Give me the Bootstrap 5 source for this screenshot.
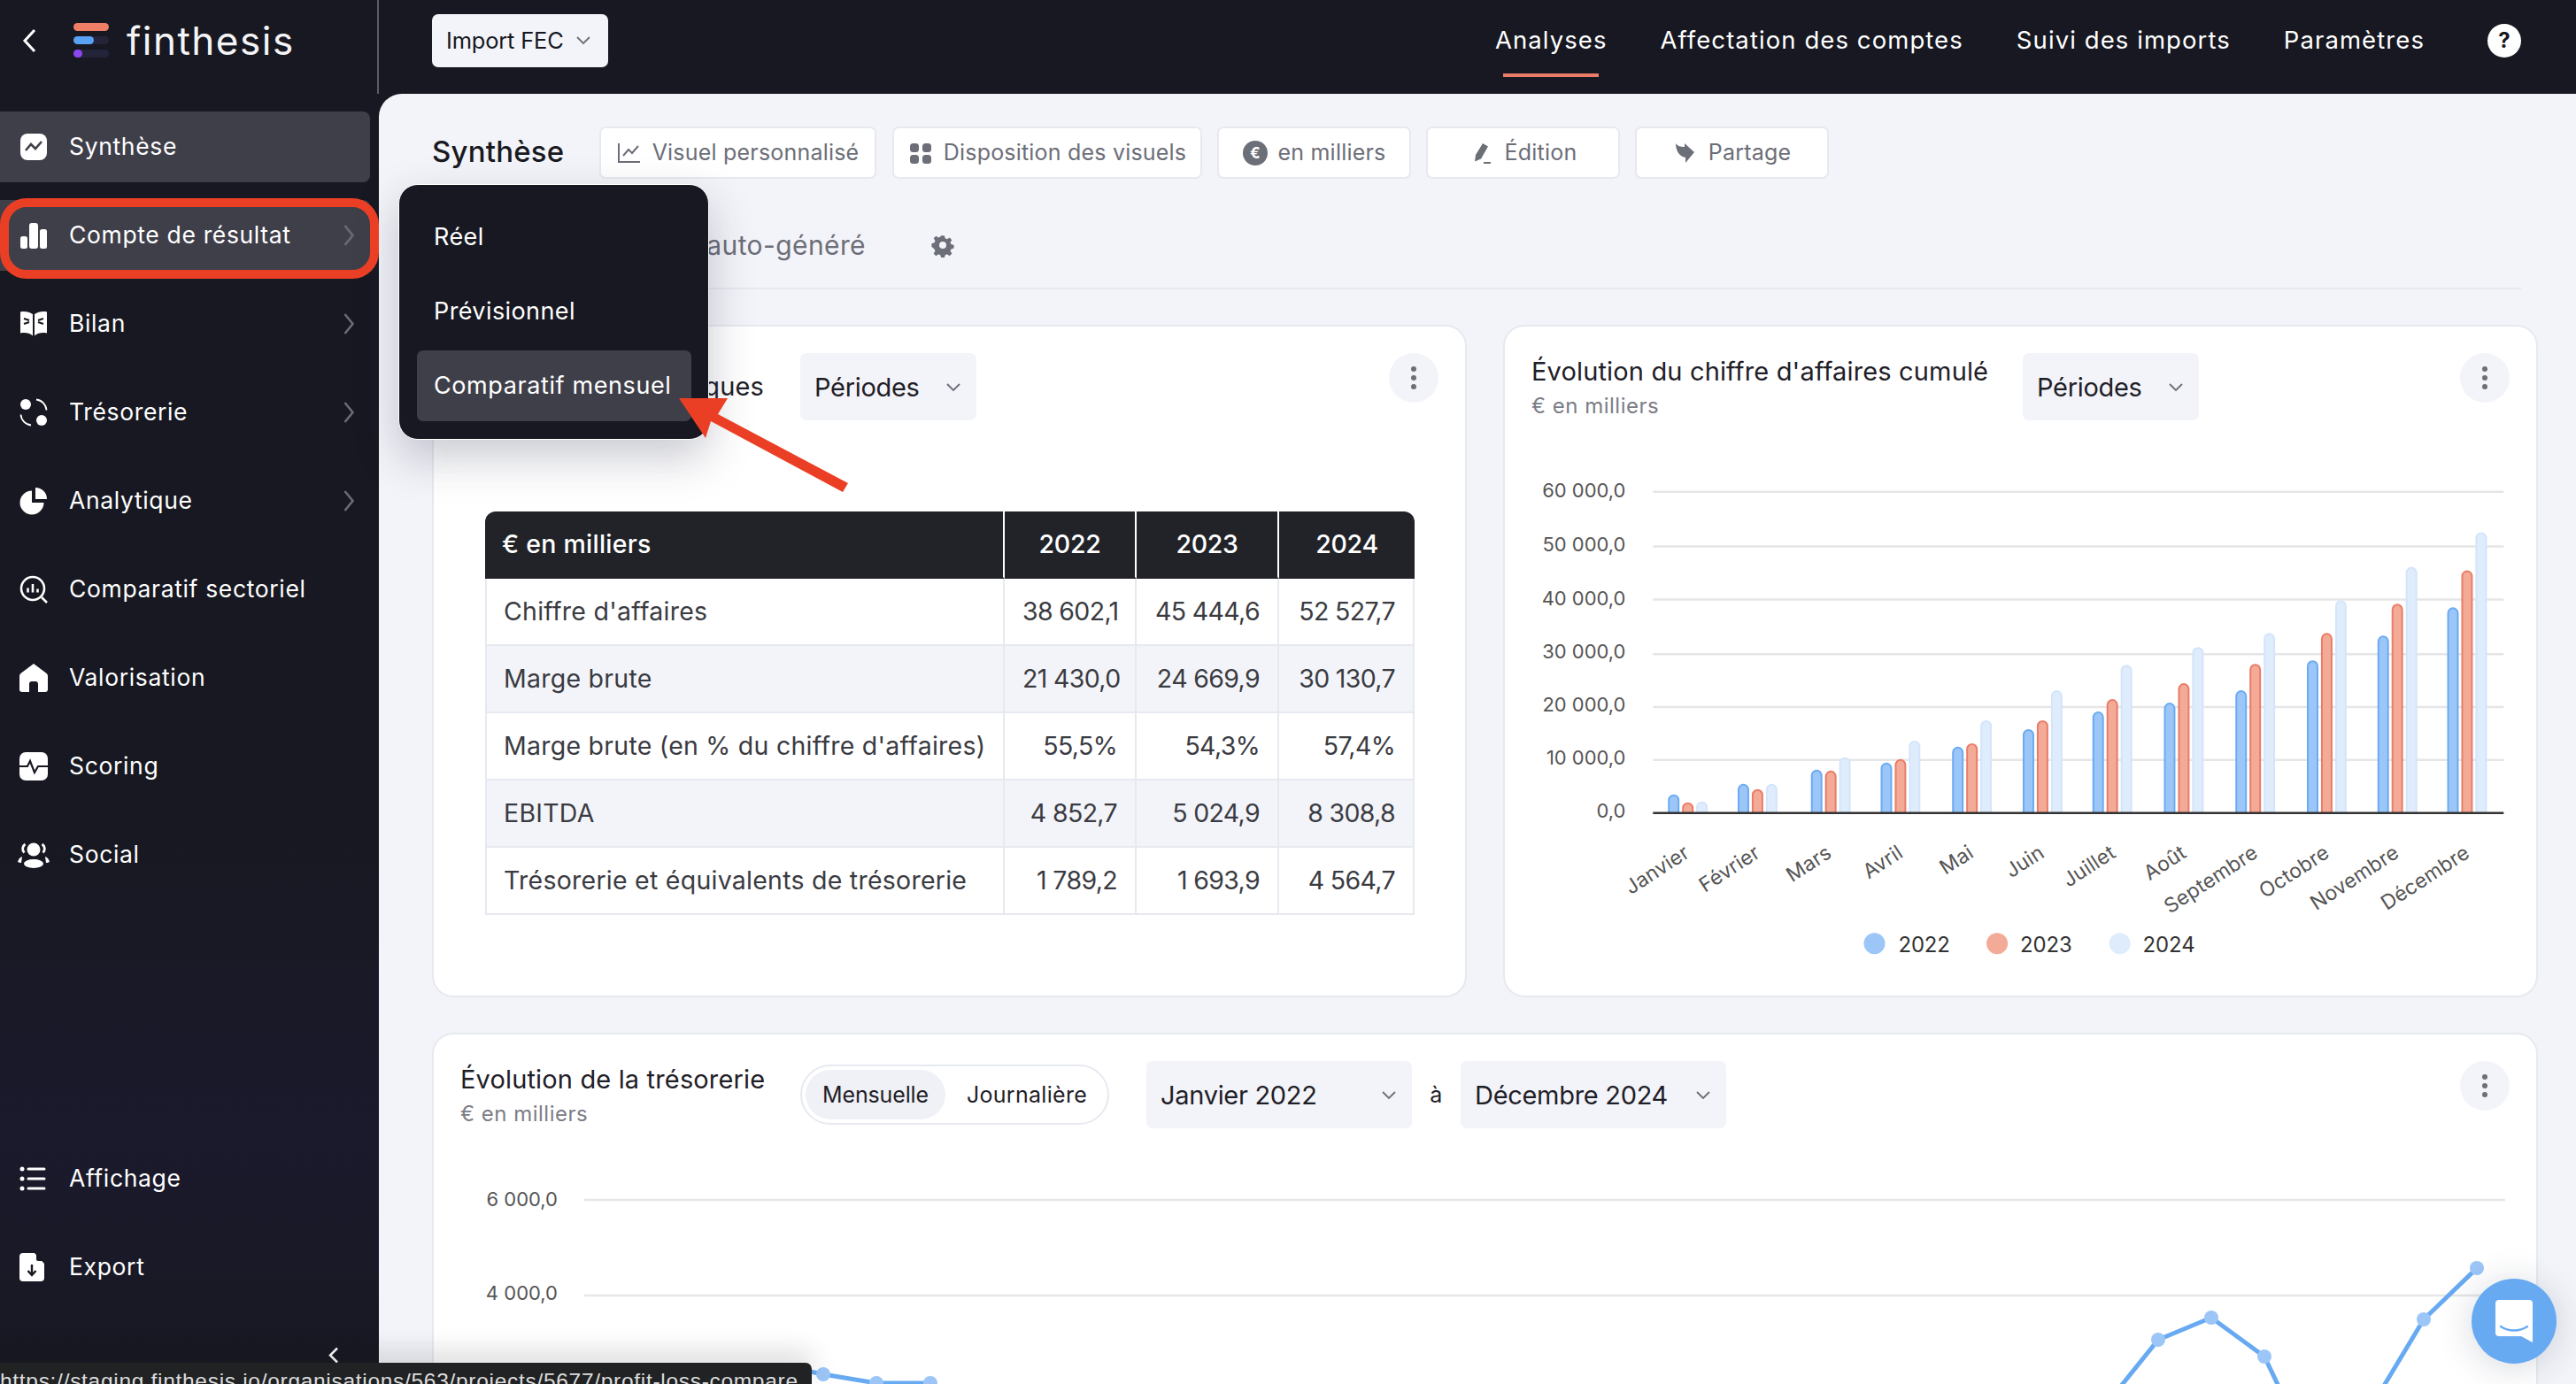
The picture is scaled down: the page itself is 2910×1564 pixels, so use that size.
<!DOCTYPE html>
<html lang="fr">
<head>
<meta charset="utf-8">
<title>finthesis</title>
<link href="https://cdn.jsdelivr.net/npm/bootstrap@5.3.0/dist/css/bootstrap.min.css" rel="stylesheet">
<style>
html,body{height:100%;margin:0}
body{font-family:"Inter","Noto Sans",sans-serif;font-size:26px;background:#171821;overflow:hidden;position:relative;letter-spacing:.35px}
.app-shell{width:2910px;height:1564px}
.side-panel{width:428px;flex:none;height:1564px;background:linear-gradient(180deg,#171821 0,#171821 60%,#1b1a2d 82%,#171821 100%)}
.side-top{height:106px;border-right:2px solid #5c5c64;padding:0 0 14px 25px}
.back-ico{width:16px;height:28px;margin-right:42px}
.logo-mark{width:40px;height:40px;margin-right:20px}
.logo-word{font-size:44px;color:#f4f4f6;letter-spacing:1.5px;line-height:1}
.side-list{padding-top:20px}
.side-list .nav-link{height:80px;width:418px;margin-bottom:20px;color:#fff;padding:0 18px 0 22px;border-radius:0 8px 8px 0;font-size:26.5px;letter-spacing:.65px}
.side-list .nav-link.is-on{background:#3f3f4a}
.side-ico{width:32px;height:32px;margin-right:24px;flex:none}
.side-ico-wide{width:36px;margin-left:-2px;margin-right:22px}
.side-chev{width:12px;height:28px;margin-left:auto}
.side-foot{margin-top:auto;padding-bottom:72px}
.collapse-ico{position:absolute;left:370px;top:1522px;width:13px;height:19px}
.work-col{min-width:0}
.top-bar{height:106px;padding:0 62px 14px 60px;background:#171821}
.import-btn{width:199px;height:60px;background:#f3f4f9;color:#17181f;border:0;border-radius:7px;padding:0 20px 0 16px;font-size:25.5px;letter-spacing:-.2px}
.top-links{gap:60px;margin-left:auto;margin-right:71px}
.top-links .nav-link{color:#fff;padding:0;font-size:27.5px;position:relative;letter-spacing:1.08px}
.top-links .nav-link.is-on::after{content:"";position:absolute;left:9px;right:10px;bottom:-20px;height:4px;background:#ea7c68}
.help-ico{width:38px;height:38px;background:#fff;border-radius:50%;color:#171821;font-weight:700;font-size:24px;line-height:38px;text-align:center;letter-spacing:0}
.work-area{background:#f3f4f9;border-top-left-radius:26px;padding:37px 43px 0 60px;height:1458px;overflow:hidden}
.tool-row{height:58px}
.page-name{font-size:33px;font-weight:500;color:#191a21;width:189px;letter-spacing:.2px}
.tool-btn{height:59px;background:#fff;border:2px solid #e7e9f0;border-radius:7px;color:#6c6e78;font-size:25px;padding:2px 0 0;letter-spacing:.2px}
.tool-btn svg{width:28px;height:28px;margin-right:12px;flex:none}
.tb-a{width:313px;margin-right:18px}
.tb-b{width:350px;margin-right:17px}
.tb-c{width:219px;margin-right:17px}
.tb-d{width:219px;margin-right:17px}
.tb-e{width:219px}
.tab-row{height:126px;border-bottom:2px solid #e7e9f0;margin-right:19px;margin-bottom:40px;padding-top:28px}
.tab-name{width:490px;text-align:right;font-size:30px;color:#6c6e78;line-height:48px;white-space:nowrap;overflow:hidden;letter-spacing:.4px}
.gear-ico{width:28px;height:28px;margin-left:73px}
.two-cols{--bs-gutter-x:41px;margin-bottom:40px}
.panel-box{border:2px solid #e7e9f0;border-radius:24px;background:#fff;--bs-card-bg:#fff}
.panel-tall{height:760px}
.panel-low{height:500px}
.panel-head{padding:30px 30px 0 30px}
.panel-title{font-size:29px;color:#1f2027;line-height:40px;white-space:nowrap;letter-spacing:.15px}
.panel-sub{font-size:24px;color:#7b7d87;line-height:36px;margin-top:1px;letter-spacing:.5px}
.head-a{width:384px;flex:none;padding-top:1px}
.head-a1{text-align:right;line-height:76px;overflow:hidden;padding:0 41px 0 0}
.head-b{width:555px;flex:none;padding-top:1px}
.pick-btn{height:76px;background:#f3f4f9;border:0;border-radius:7px;color:#1f2027;font-size:29px;padding:2px 18px 0 16px;letter-spacing:-.3px}
.pick-btn svg{width:16px;height:10px;flex:none;margin-left:auto}
.pick-a{width:199px}
.pick-b{width:300px}
.kebab-btn{width:56px;height:56px;border-radius:50%;background:#f3f4f9;margin-left:auto;border:0;padding:0}
.kebab-btn svg{width:8px;height:28px}
.tbl-wrap{padding:103px 58px 0 58px}
.fin-table{border-collapse:separate;border-spacing:0;width:1050px;table-layout:fixed;font-size:28.5px;margin:0;color:#3a3b42;--bs-table-color:#3a3b42;letter-spacing:.25px}
.fin-table th,.fin-table td{height:76px;padding:0 20px;vertical-align:middle;border:0;border-right:2px solid #e7e9f0;border-bottom:2px solid #e7e9f0;white-space:nowrap;font-weight:400}
.fin-table td:first-child{border-left:2px solid #e7e9f0;padding-left:19px}
.fin-table th{background:#212329;color:#fff;--bs-table-bg:#212329;--bs-table-color:#fff;border-right-color:#fff;border-bottom:2px solid #212329;font-weight:500}
.fin-table th:first-child{border-top-left-radius:12px;padding-left:19px;text-align:left}
.fin-table th:last-child{border-top-right-radius:12px;border-right:0}
.fin-table tbody tr:nth-child(even) td{--bs-table-bg:#f3f4f9;background:#f3f4f9}
.c-1{width:587px}.c-2{width:149px}.c-3{width:161px}.c-4{width:153px}
.fin-table td.num-cell{text-align:right;letter-spacing:-.65px}
.fin-table th.th-mid{text-align:center;letter-spacing:-.3px}
.chart-svg{display:block}
.chart-svg text{font-family:"Inter","Noto Sans",sans-serif}
.axis-t{font-size:22px;fill:#555;letter-spacing:0}
.month-t{font-size:23px;fill:#555;letter-spacing:.2px}
.leg-t{font-size:24px;fill:#333;letter-spacing:-.1px}
.mode-pill{width:349px;height:68px;border:2px solid #e7e9f0;border-radius:34px;padding:4px;margin:4px 42px 0 0;font-size:25px;flex:none}
.mode-on{width:158px;height:56px;background:#f0f1f6;border-radius:28px;color:#1f2027;letter-spacing:-.15px;padding-top:2px}
.mode-off{width:172px;height:56px;color:#1f2027;letter-spacing:.3px;margin-left:6px;padding-top:2px}
.range-a{width:55px;font-size:25px;color:#1f2027;line-height:76px;text-align:center;flex:none}
.pop-menu{position:absolute;left:450px;top:208px;width:351px;height:289px;display:block;background:#171821;border:1px solid #fff;border-radius:22px;padding:19px 20px;margin:0;box-shadow:0 20px 50px rgba(40,42,70,.25);--bs-dropdown-bg:#171821}
.pop-menu .dropdown-item{height:80px;width:310px;color:#fff;border-radius:7px;padding:0 0 0 19px;font-size:27px;margin-bottom:4px;display:flex;align-items:center;background:transparent;letter-spacing:.4px}
.pop-menu .dropdown-item.is-on{background:#3f3f4a;margin-top:1px;letter-spacing:.6px}
.red-ring{position:absolute;left:0;top:224px;width:428px;height:91px;border:10px solid #ea3f24;border-radius:30px;pointer-events:none;z-index:1100}
.red-arrow{position:absolute;left:760px;top:445px;width:205px;height:115px;z-index:1100}
.status-tip{position:absolute;left:0;top:1540px;width:917px;height:24px;background:#202224;border-top-right-radius:7px;color:#dcdcdc;font-family:"Liberation Sans",Arial,sans-serif;font-size:24.5px;line-height:28px;padding-top:7px;overflow:hidden;white-space:nowrap;box-shadow:0 -10px 30px rgba(20,20,30,.18);letter-spacing:.7px}
.chat-fab{position:absolute;left:2792px;top:1445px;width:96px;height:96px;border-radius:50%;background:#68aaf2;box-shadow:0 4px 40px rgba(30,40,70,.18)}
.chat-fab svg{width:42px;height:48px}
</style>
</head>
<body>
<div class="app-shell d-flex">
  <aside class="side-panel d-flex flex-column">
    <div class="side-top d-flex align-items-center">
      <svg class="back-ico" viewBox="0 0 16 28"><path d="M14 2 3 14l11 12" fill="none" stroke="#fff" stroke-width="3"/></svg>
      <svg class="logo-mark" viewBox="0 0 40 40">
        <rect y="0" width="40" height="9" rx="4.5" fill="#ee7f66"/>
        <rect y="15" width="40" height="9" rx="4.5" fill="#23243a"/>
        <rect y="15" width="23" height="9" rx="4.5" fill="#5aa2f5"/>
        <rect y="30" width="40" height="9" rx="4.5" fill="#23243a"/>
        <rect y="30" width="10" height="9" rx="4.5" fill="#8b46ee"/>
      </svg>
      <span class="logo-word">finthesis</span>
    </div>
    <nav class="nav flex-column side-list flex-grow-1 flex-nowrap">
      <a class="nav-link d-flex align-items-center is-on" href="#"><svg class="side-ico" viewBox="0 0 32 32"><rect x="1" y="1" width="30" height="30" rx="8" fill="#fff"/><path d="M7 20l6-7 5 5 7-8" fill="none" stroke="#3f3f4a" stroke-width="2.6"/></svg>Synthèse</a>
      <a class="nav-link d-flex align-items-center is-on" href="#"><svg class="side-ico" viewBox="0 0 32 32"><rect x="1" y="17" width="8" height="14" rx="2.5" fill="#fff"/><rect x="11" y="2" width="10" height="29" rx="3" fill="#fff"/><rect x="23" y="9" width="8" height="22" rx="2.5" fill="#fff"/></svg>Compte de résultat<svg class="side-chev" viewBox="0 0 12 28"><path d="M1.500 3 10.500 14l-9 11" fill="none" stroke="#6b6b75" stroke-width="2.6"/></svg></a>
      <a class="nav-link d-flex align-items-center" href="#"><svg class="side-ico" viewBox="0 0 32 32"><path d="M15 5C11 2.500 6 1.500 1 2.500v24c5-1 10-.5 14 3zM17 5c4-2.500 9-3.500 14-2.500v24c-5-1-10-.5-14 3z" fill="#fff"/><path d="M5 10l6 2M5 16l6-2M27 10l-6 2M27 16l-6-2" stroke="#171821" stroke-width="2"/></svg>Bilan<svg class="side-chev" viewBox="0 0 12 28"><path d="M1.500 3 10.500 14l-9 11" fill="none" stroke="#6b6b75" stroke-width="2.600"/></svg></a>
      <a class="nav-link d-flex align-items-center" href="#"><svg class="side-ico" viewBox="0 0 32 32"><circle cx="7" cy="7" r="6" fill="#fff"/><circle cx="25" cy="25" r="6" fill="#fff"/><path d="M19 1.500a13 13 0 0 1 11.500 12M1.500 18.500a13 13 0 0 0 11.500 12" fill="none" stroke="#fff" stroke-width="1.800"/></svg>Trésorerie<svg class="side-chev" viewBox="0 0 12 28"><path d="M1.500 3 10.500 14l-9 11" fill="none" stroke="#6b6b75" stroke-width="2.600"/></svg></a>
      <a class="nav-link d-flex align-items-center" href="#"><svg class="side-ico" viewBox="0 0 32 32"><path d="M14 4.500a13.500 13.500 0 1 0 13.500 13.500H14z" fill="#fff"/><path d="M18 1a13 13 0 0 1 13 13H18z" fill="#fff"/></svg>Analytique<svg class="side-chev" viewBox="0 0 12 28"><path d="M1.500 3 10.500 14l-9 11" fill="none" stroke="#6b6b75" stroke-width="2.600"/></svg></a>
      <a class="nav-link d-flex align-items-center" href="#"><svg class="side-ico" viewBox="0 0 32 32"><circle cx="15" cy="15" r="13" fill="none" stroke="#fff" stroke-width="2.600"/><path d="M9.500 14.500v5M15 10v9.500M20.500 15.500v4M25 25l6 6" fill="none" stroke="#fff" stroke-width="2.600"/></svg>Comparatif sectoriel</a>
      <a class="nav-link d-flex align-items-center" href="#"><svg class="side-ico" viewBox="0 0 32 32"><path d="M16 0 30 10.500a4 4 0 0 1 2 3.500v15a3 3 0 0 1-3 3h-8V23a3 3 0 0 0-3-3h-4a3 3 0 0 0-3 3v9H3a3 3 0 0 1-3-3V14a4 4 0 0 1 2-3.500z" fill="#fff"/></svg>Valorisation</a>
      <a class="nav-link d-flex align-items-center" href="#"><svg class="side-ico" viewBox="0 0 32 32"><rect x="0" y="0" width="32" height="32" rx="7" fill="#fff"/><path d="M0 16h9l3-6 5 13 4-7h11" fill="none" stroke="#171821" stroke-width="2.200"/></svg>Scoring</a>
      <a class="nav-link d-flex align-items-center" href="#"><svg class="side-ico side-ico-wide" viewBox="0 0 36 32"><circle cx="18" cy="10" r="7.500" fill="#fff"/><ellipse cx="18" cy="26" rx="11" ry="5" fill="#fff"/><path d="M8.500 4a6 6 0 0 0-1 9.500M27.500 4a6 6 0 0 1 1 9.500" fill="none" stroke="#fff" stroke-width="2.800"/><path d="M5 18c-3 1-4 3-5 6 2 1 3 1 4 1zM31 18c3 1 4 3 5 6-2 1-3 1-4 1z" fill="#fff"/></svg>Social</a>
      <div class="side-foot">
        <a class="nav-link d-flex align-items-center" href="#"><svg class="side-ico" viewBox="0 0 32 32"><circle cx="3" cy="5" r="2.500" fill="#fff"/><circle cx="3" cy="16" r="2.500" fill="#fff"/><circle cx="3" cy="27" r="2.500" fill="#fff"/><path d="M10 5h18M10 16h18M10 27h18" stroke="#fff" stroke-width="3" stroke-linecap="round"/></svg>Affichage</a>
        <a class="nav-link d-flex align-items-center" href="#"><svg class="side-ico" viewBox="0 0 32 32"><path d="M4 0h13l11 12v16a4 4 0 0 1-4 4H4a4 4 0 0 1-4-4V4a4 4 0 0 1 4-4z" fill="#fff"/><path d="M19 0l9 9h-7a2 2 0 0 1-2-2z" fill="#171821"/><path d="M14 13v11M9.500 20l4.500 5 4.500-5" fill="none" stroke="#171821" stroke-width="2.400"/></svg>Export</a>
      </div>
    </nav>
  </aside>

  <div class="work-col flex-grow-1 d-flex flex-column">
    <header class="top-bar d-flex align-items-center">
      <button class="import-btn btn d-flex align-items-center justify-content-between" type="button">Import FEC<svg width="16" height="10" viewBox="0 0 16 10"><path d="M1 1l7 7 7-7" fill="none" stroke="#6c6e78" stroke-width="1.800"/></svg></button>
      <nav class="nav top-links">
        <a class="nav-link is-on" href="#">Analyses</a>
        <a class="nav-link" href="#">Affectation des comptes</a>
        <a class="nav-link" href="#">Suivi des imports</a>
        <a class="nav-link" href="#">Paramètres</a>
      </nav>
      <div class="help-ico">?</div>
    </header>

    <main class="work-area">
      <div class="tool-row d-flex align-items-center">
        <div class="page-name">Synthèse</div>
        <button class="btn tool-btn tb-a d-flex align-items-center justify-content-center" type="button"><svg viewBox="0 0 28 28"><path d="M2 3v21h24" fill="none" stroke="#6c6e78" stroke-width="2"/><path d="M7 17l6-7 4 4 7-8" fill="none" stroke="#6c6e78" stroke-width="2"/></svg>Visuel personnalisé</button>
        <button class="btn tool-btn tb-b d-flex align-items-center justify-content-center" type="button"><svg viewBox="0 0 28 28"><rect x="2" y="3" width="10" height="10" rx="3.500" fill="#6c6e78"/><rect x="16" y="3" width="10" height="10" rx="3.500" fill="#6c6e78"/><rect x="2" y="16" width="10" height="10" rx="3.500" fill="#6c6e78"/><rect x="16" y="16" width="10" height="10" rx="3.500" fill="#6c6e78"/></svg>Disposition des visuels</button>
        <button class="btn tool-btn tb-c d-flex align-items-center justify-content-center" type="button"><svg viewBox="0 0 28 28"><circle cx="14" cy="14" r="14" fill="#6c6e78"/><text x="14" y="20" text-anchor="middle" font-size="17" font-weight="700" fill="#fff">€</text></svg>en milliers</button>
        <button class="btn tool-btn tb-d d-flex align-items-center justify-content-center" type="button"><svg viewBox="0 0 28 28"><path d="M15 3l6 3.500-8 14-7 3 1-7.500z" fill="#6c6e78"/><path d="M16 25h8" stroke="#6c6e78" stroke-width="2"/></svg>Édition</button>
        <button class="btn tool-btn tb-e d-flex align-items-center justify-content-center" type="button"><svg viewBox="0 0 28 28"><path d="M3 3c2 3 5 4 10 4V3l11 10-10 12v-6C7 18 3 11 3 3z" fill="#6c6e78"/></svg>Partage</button>
      </div>

      <div class="tab-row d-flex align-items-center">
        <div class="tab-name">Tableau de bord auto-généré</div>
        <svg class="gear-ico" viewBox="0 0 28 28"><path d="M12 2h4l1 3.500 2.500 1 3-2 3 3-2 3 1 2.500 3.500 1v4l-3.500 1-1 2.500 2 3-3 3-3-2-2.500 1-1 3.500h-4l-1-3.500-2.500-1-3 2-3-3 2-3-1-2.500L0 16v-4l3.500-1 1-2.500-2-3 3-3 3 2 2.500-1z" transform="translate(1.400 1.400) scale(.9)" fill="#6c6e78"/><circle cx="14" cy="14" r="4" fill="#f3f4f9"/></svg>
      </div>

      <div class="row two-cols">
        <div class="col-6">
          <section class="card panel-box panel-tall">
            <div class="panel-head d-flex align-items-start">
              <div class="head-a panel-title head-a1">Données historiques</div>
              <button class="btn pick-btn pick-a d-flex align-items-center" type="button">Périodes<svg viewBox="0 0 16 10"><path d="M1 1l7 7 7-7" fill="none" stroke="#6c6e78" stroke-width="1.800"/></svg></button>
              <button class="btn kebab-btn d-flex align-items-center justify-content-center" type="button"><svg viewBox="0 0 8 28"><circle cx="4" cy="4" r="3" fill="#6c6e78"/><circle cx="4" cy="14" r="3" fill="#6c6e78"/><circle cx="4" cy="24" r="3" fill="#6c6e78"/></svg></button>
            </div>
            <div class="tbl-wrap">
              <table class="table fin-table">
                <colgroup><col class="c-1"><col class="c-2"><col class="c-3"><col class="c-4"></colgroup>
                <thead><tr><th>€ en milliers</th><th class="th-mid">2022</th><th class="th-mid">2023</th><th class="th-mid">2024</th></tr></thead>
                <tbody>
                  <tr><td>Chiffre d'affaires</td><td class="num-cell">38 602,1</td><td class="num-cell">45 444,6</td><td class="num-cell">52 527,7</td></tr>
                  <tr><td>Marge brute</td><td class="num-cell">21 430,0</td><td class="num-cell">24 669,9</td><td class="num-cell">30 130,7</td></tr>
                  <tr><td>Marge brute (en % du chiffre d'affaires)</td><td class="num-cell">55,5%</td><td class="num-cell">54,3%</td><td class="num-cell">57,4%</td></tr>
                  <tr><td>EBITDA</td><td class="num-cell">4 852,7</td><td class="num-cell">5 024,9</td><td class="num-cell">8 308,8</td></tr>
                  <tr><td>Trésorerie et équivalents de trésorerie</td><td class="num-cell">1 789,2</td><td class="num-cell">1 693,9</td><td class="num-cell">4 564,7</td></tr>
                </tbody>
              </table>
            </div>
          </section>
        </div>
        <div class="col-6">
          <section class="card panel-box panel-tall">
            <div class="panel-head d-flex align-items-start">
              <div class="head-b">
                <div class="panel-title">Évolution du chiffre d'affaires cumulé</div>
                <div class="panel-sub">€ en milliers</div>
              </div>
              <button class="btn pick-btn pick-a d-flex align-items-center" type="button">Périodes<svg viewBox="0 0 16 10"><path d="M1 1l7 7 7-7" fill="none" stroke="#6c6e78" stroke-width="1.800"/></svg></button>
              <button class="btn kebab-btn d-flex align-items-center justify-content-center" type="button"><svg viewBox="0 0 8 28"><circle cx="4" cy="4" r="3" fill="#6c6e78"/><circle cx="4" cy="14" r="3" fill="#6c6e78"/><circle cx="4" cy="24" r="3" fill="#6c6e78"/></svg></button>
            </div>
            <svg class="chart-svg" width="1164" height="650" viewBox="1700 476 1164 650">
              <defs><clipPath id="barclip"><rect x="1700" y="500" width="1164" height="419"/></clipPath></defs>
              <g stroke="#e6e6e8" stroke-width="2.500">
                <path d="M1866 555H2830M1866 617H2830M1866 677H2830M1866 739H2830M1866 799H2830M1866 859H2830"/>
              </g>
              <g class="axis-t" text-anchor="end">
                <text x="1835" y="561" class="axis-t">60 000,0</text>
                <text x="1835" y="622" class="axis-t">50 000,0</text>
                <text x="1835" y="684" class="axis-t">40 000,0</text>
                <text x="1835" y="744" class="axis-t">30 000,0</text>
                <text x="1835" y="804" class="axis-t">20 000,0</text>
                <text x="1835" y="864" class="axis-t">10 000,0</text>
                <text x="1835" y="924" class="axis-t">0,0</text>
              </g>
              <g clip-path="url(#barclip)" stroke-width="2">
                <g fill="#dfecfc" stroke="#d3e5fb">
                  <rect x="1916" y="907" width="11" height="30" rx="5.500"/><rect x="1995" y="887" width="11" height="50" rx="5.500"/><rect x="2078" y="857" width="11" height="80" rx="5.500"/><rect x="2157" y="838" width="11" height="99" rx="5.500"/><rect x="2238" y="815" width="11" height="122" rx="5.500"/><rect x="2318" y="781" width="11" height="156" rx="5.500"/><rect x="2397" y="752" width="11" height="185" rx="5.500"/><rect x="2478" y="732" width="11" height="205" rx="5.500"/><rect x="2559" y="716" width="11" height="221" rx="5.500"/><rect x="2640" y="679" width="11" height="258" rx="5.500"/><rect x="2720" y="641" width="11" height="296" rx="5.500"/><rect x="2799" y="602" width="11" height="335" rx="5.500"/>
                </g>
                <g fill="#9cc6f7" stroke="#6aabf3">
                  <rect x="1884" y="899" width="11" height="38" rx="5.500"/><rect x="1963" y="887" width="11" height="50" rx="5.500"/><rect x="2046" y="871" width="11" height="66" rx="5.500"/><rect x="2125" y="863" width="11" height="74" rx="5.500"/><rect x="2206" y="845" width="11" height="92" rx="5.500"/><rect x="2286" y="825" width="11" height="112" rx="5.500"/><rect x="2365" y="805" width="11" height="132" rx="5.500"/><rect x="2446" y="795" width="11" height="142" rx="5.500"/><rect x="2527" y="781" width="11" height="156" rx="5.500"/><rect x="2608" y="747" width="11" height="190" rx="5.500"/><rect x="2688" y="719" width="11" height="218" rx="5.500"/><rect x="2767" y="687" width="11" height="250" rx="5.500"/>
                </g>
                <g fill="#f3aa97" stroke="#ea7c68">
                  <rect x="1900" y="908" width="11" height="29" rx="5.500"/><rect x="1979" y="893" width="11" height="44" rx="5.500"/><rect x="2062" y="872" width="11" height="65" rx="5.500"/><rect x="2141" y="859" width="11" height="78" rx="5.500"/><rect x="2222" y="841" width="11" height="96" rx="5.500"/><rect x="2302" y="815" width="11" height="122" rx="5.500"/><rect x="2381" y="791" width="11" height="146" rx="5.500"/><rect x="2462" y="773" width="11" height="164" rx="5.500"/><rect x="2543" y="751" width="11" height="186" rx="5.500"/><rect x="2624" y="716" width="11" height="221" rx="5.500"/><rect x="2704" y="683" width="11" height="254" rx="5.500"/><rect x="2783" y="645" width="11" height="292" rx="5.500"/>
                </g>
              </g>
              <path d="M1866 919H2830" stroke="#333" stroke-width="2.500"/>
              <g class="month-t" text-anchor="end">
                <text class="month-t" transform="translate(1909 968) rotate(-33)">Janvier</text>
                <text class="month-t" transform="translate(1989 968) rotate(-33)">Février</text>
                <text class="month-t" transform="translate(2070 968) rotate(-33)">Mars</text>
                <text class="month-t" transform="translate(2151 968) rotate(-33)">Avril</text>
                <text class="month-t" transform="translate(2231 968) rotate(-33)">Mai</text>
                <text class="month-t" transform="translate(2311 968) rotate(-33)">Juin</text>
                <text class="month-t" transform="translate(2392 968) rotate(-33)">Juillet</text>
                <text class="month-t" transform="translate(2472 968) rotate(-33)">Août</text>
                <text class="month-t" transform="translate(2553 968) rotate(-33)">Septembre</text>
                <text class="month-t" transform="translate(2634 968) rotate(-33)">Octobre</text>
                <text class="month-t" transform="translate(2713 968) rotate(-33)">Novembre</text>
                <text class="month-t" transform="translate(2793 968) rotate(-33)">Décembre</text>
              </g>
              <circle cx="2117" cy="1067" r="12" fill="#9cc6f7"/><text class="leg-t" x="2144" y="1077">2022</text>
              <circle cx="2256" cy="1067" r="12" fill="#f3aa97"/><text class="leg-t" x="2282" y="1077">2023</text>
              <circle cx="2395" cy="1067" r="12" fill="#dfecfc"/><text class="leg-t" x="2421" y="1077">2024</text>
            </svg>
          </section>
        </div>
      </div>

      <section class="card panel-box panel-low">
        <div class="panel-head d-flex align-items-start">
          <div class="head-a">
            <div class="panel-title">Évolution de la trésorerie</div>
            <div class="panel-sub">€ en milliers</div>
          </div>
          <div class="mode-pill d-flex align-items-center">
            <div class="mode-on d-flex align-items-center justify-content-center">Mensuelle</div>
            <div class="mode-off d-flex align-items-center justify-content-center">Journalière</div>
          </div>
          <button class="btn pick-btn pick-b d-flex align-items-center" type="button">Janvier 2022<svg viewBox="0 0 16 10"><path d="M1 1l7 7 7-7" fill="none" stroke="#6c6e78" stroke-width="1.800"/></svg></button>
          <div class="range-a">à</div>
          <button class="btn pick-btn pick-b d-flex align-items-center" type="button">Décembre 2024<svg viewBox="0 0 16 10"><path d="M1 1l7 7 7-7" fill="none" stroke="#6c6e78" stroke-width="1.800"/></svg></button>
          <button class="btn kebab-btn d-flex align-items-center justify-content-center" type="button"><svg viewBox="0 0 8 28"><circle cx="4" cy="4" r="3" fill="#6c6e78"/><circle cx="4" cy="14" r="3" fill="#6c6e78"/><circle cx="4" cy="24" r="3" fill="#6c6e78"/></svg></button>
        </div>
        <svg class="chart-svg" width="2374" height="290" viewBox="490 1276 2374 290">
          <path d="M660 1355H2830M660 1463H2830" stroke="#e6e6e8" stroke-width="2.500"/>
          <text class="axis-t" x="630" y="1362" text-anchor="end">6 000,0</text>
          <text class="axis-t" x="630" y="1468" text-anchor="end">4 000,0</text>
          <path d="M900 1546 930 1552 990 1562 1051 1562 1110 1600M2360 1610 2438 1513 2498 1488 2558 1532 2600 1620M2660 1620 2738 1490 2798 1432" fill="none" stroke="#68aaf2" stroke-width="5"/>
          <g fill="#9cc6f7">
            <circle cx="930" cy="1552" r="8"/><circle cx="990" cy="1562" r="8"/><circle cx="1051" cy="1562" r="8"/>
            <circle cx="2438" cy="1513" r="8"/><circle cx="2498" cy="1488" r="8"/><circle cx="2558" cy="1532" r="8"/>
            <circle cx="2738" cy="1490" r="8"/><circle cx="2798" cy="1432" r="8"/>
          </g>
        </svg>
      </section>
    </main>
  </div>
</div>

<div class="dropdown-menu show pop-menu">
  <a class="dropdown-item" href="#">Réel</a>
  <a class="dropdown-item" href="#">Prévisionnel</a>
  <a class="dropdown-item is-on" href="#">Comparatif mensuel</a>
</div>

<div class="red-ring"></div>
<svg class="red-arrow" viewBox="760 445 205 115"><path d="M767 450 822 450 811 468 958 546 952 556 803 476 797 495z" fill="#ea3f24"/></svg>
<svg class="collapse-ico" viewBox="0 0 13 19"><path d="M11 1.500 3 9.500l8 8" fill="none" stroke="#fff" stroke-width="2.500"/></svg>
<div class="status-tip">https://staging.finthesis.io/organisations/563/projects/5677/profit-loss-compare</div>
<div class="chat-fab d-flex align-items-center justify-content-center">
  <svg viewBox="0 0 42 48"><path d="M4 0h34a4 4 0 0 1 4 4v44l-13-7H4a4 4 0 0 1-4-4V4a4 4 0 0 1 4-4z" fill="#fff"/><path d="M6 30c9 6 21 6 30 0" fill="none" stroke="#68aaf2" stroke-width="2.500" stroke-linecap="round"/></svg>
</div>
<script src="https://cdn.jsdelivr.net/npm/bootstrap@5.3.0/dist/js/bootstrap.bundle.min.js"></script>
</body>
</html>
